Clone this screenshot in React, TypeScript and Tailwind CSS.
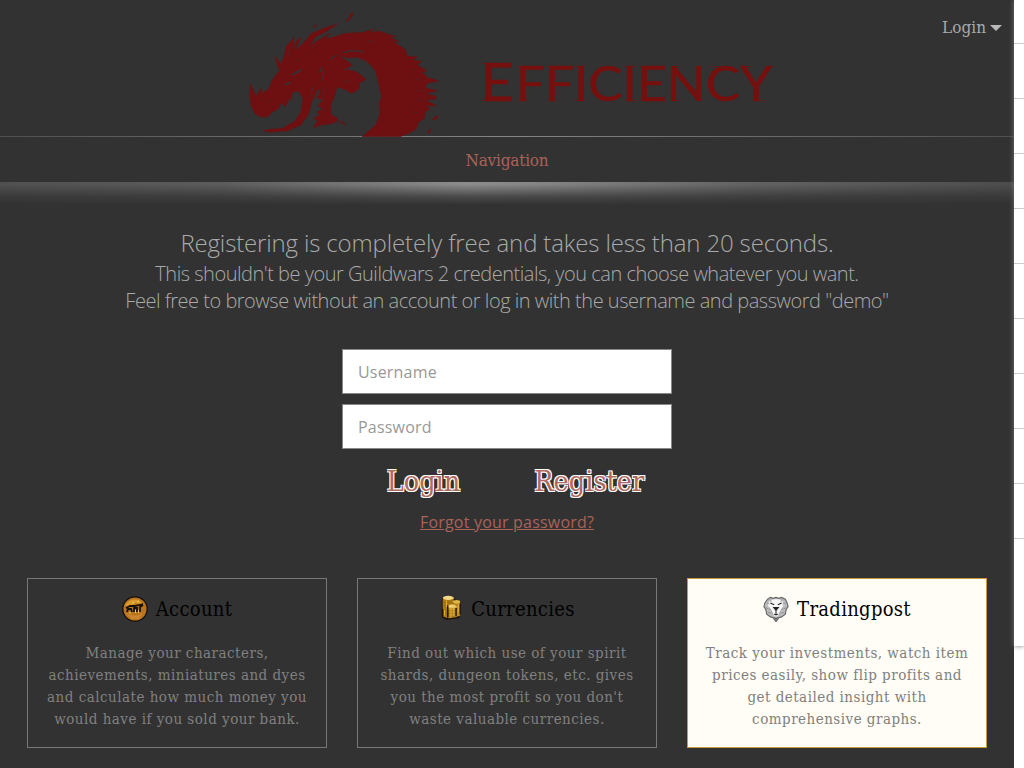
import type { ReactNode } from "react";

const serif = "font-['DejaVu_Serif_Condensed','DejaVu_Serif',serif] [font-stretch:condensed]";

function Dragon() {
  return (
    <svg width="230" height="137" viewBox="0 0 690 411" className="relative block shrink-0" aria-hidden="true">
      <g fill="#6e1011" stroke="#5a1a1c" strokeWidth="1.5">
        <path d="M61 250 78 289 93 264 97 280 115 267 128 238 148 211 138 185 136 166 151 193 162 170 168 140 193 111 188 145 201 120 214 112 194 152 222 127 244 100 288 82 327 70 286 96 257 112 240 138 263 121 280 112 302 98 288 116 316 109 350 99 399 97 434 86 418 97 448 93 486 106 500 109 482 112 510 126 488 124 526 148 531 167 564 171 548 179 576 184 562 194 580 205 592 213 575 217 587 224 590 232 628 242 590 251 587 263 625 272 587 281 620 289 618 298 589 299 620 318 588 319 600 327 585 337 585 354 566 367 560 386 538 400 510 410 396 410 438 374 450 338 447 310 454 290 446 252 437 214 411 184 380 172 352 174 330 166 347 180 368 194 349 207 382 216 408 238 387 252 390 265 365 281 342 267 322 262 314 288 303 314 303 343 324 355 319 367 296 373 275 375 249 383 263 362 250 354 270 345 260 337 278 327 264 318 278 299 260 295 272 270 263 269 247 304 235 344 213 375 173 393 120 397 98 392 118 388 158 384 196 362 213 333 218 296 206 274 187 278 184 303 179 294 167 320 153 309 148 325 127 337 113 351 93 352 75 342 62 316 58 286Z" />
        <path d="m346 63 13-11 1-11 10-3-6 16-13 10ZM608 356l17-12-5 13-12 3ZM590 397l15-13-8 16ZM324 362l18 4 5 9-13-7ZM248 78l14-4-8 7Z" />
      </g>
      <g fill="none" stroke="#333333" strokeLinecap="round">
        <path strokeWidth="5" d="M187 224 213 210M166 254l14-6" />
        <path strokeWidth="3.5" d="M269 218l6-17M282 213l-4 28M338 159l24-7 37 3M302 176l17-10M345 209l10-4" />
        <path strokeWidth="2" opacity="0.7" d="M179 149l-2 20M244 148l13-14M250 260l-9 31M281 260l-3 46M284 320v18M341 245l20-3M413 122l20 5M542 206l12 6M557 236l15 6M564 271l17 1M562 301l16 0M548 337l14 0M96 304l7-9M112 309l9-10M201 184l12-11" />
      </g>
    </svg>
  );
}

function Wordmark() {
  return (
    <svg width="300" height="80" viewBox="0 -12 300 80" className="mt-[40px] ml-[18px] block overflow-visible" aria-label="Efficiency">
      <g fill="#76100f" stroke="#76100f" strokeWidth="0.5" fontFamily="Lato, sans-serif">
        <text x="2" y="49" fontSize="52" textLength="34" lengthAdjust="spacingAndGlyphs">E</text>
        <text x="38" y="49" fontSize="48" textLength="256" lengthAdjust="spacingAndGlyphs">FFICIENCY</text>
      </g>
      <path d="M3 11.500h7M3 48.500h7M38 14.500h6M39 48.500h10M68 14.500h6M69 48.500h10M96 14.500h12M96 48.500h12M147 14.500h12M147 48.500h12M163 14.500h8M163 48.500h8M196 14.500h7M194 48.500h10M231 14.500h9M264 14.500h10M287 14.500h9M276 48.500h11" stroke="#76100f" strokeWidth="0.8" opacity="0.7" />
    </svg>
  );
}

function CoinIcon() {
  return (
    <svg width="26" height="26" viewBox="0 0 26 26" aria-hidden="true">
      <circle cx="13" cy="13" r="12.2" fill="#b8741c" stroke="#100c06" strokeWidth="1.2" />
      <path d="M3 9Q8 2 17 4l5 5-8-2-8 4Z" fill="#d79b2d" />
      <path d="M4 17q9 5 17 0l-4 6H9Z" fill="#c98530" />
      <path d="m4 12 4-2 5 0 8-2M5 16l1-3 3 0 1 3M12 16v-4l3 0v4M18 16v-5l3-2" fill="none" stroke="#171008" strokeWidth="1.8" />
      <path d="m10 6 2 1M15 6l2-1M8 18v-2M13.500 17v-3M16.500 17v-3" stroke="#f0c94a" strokeWidth="1" />
    </svg>
  );
}

function CoinsIcon() {
  return (
    <svg width="24" height="28" viewBox="0 0 26 28" className="relative -top-px" aria-hidden="true">
      <path d="M3 4v20l5 3 7-1 7-1 2-18-6-2-4-3H5Z" fill="#1c1306" />
      <path d="M4 4v19l5 2 1-8 6-5V3Z" fill="#a87818" />
      <path d="M16 7h7v15l-5 2-8 1V12l6-2Z" fill="#c1912a" />
      <ellipse cx="10" cy="3" rx="6" ry="2.2" fill="#f3d985" />
      <ellipse cx="19" cy="7" rx="4" ry="1.8" fill="#e1ba48" />
      <ellipse cx="14" cy="12" rx="5" ry="1.8" fill="#f1cf70" />
      <path d="M5 8h8M5 11h5M4 17h4M4 20h5M17 11h5M19 15h3M11 17h7M11 20h7M11 23h6" stroke="#8a5c12" strokeWidth="0.7" />
      <path d="M8 6v7M6 16v6M13 14v10M16 14v8M21 9v9" stroke="#ebb92f" />
      <path d="M9.500 11v13M18.500 14v9M23 9v12M4 15v8" stroke="#211204" strokeWidth="1.5" />
    </svg>
  );
}

function LionIcon() {
  return (
    <svg width="26" height="26" viewBox="0 0 28 27" aria-hidden="true">
      <path d="m5 3 3-2 3 1 3-1 3 1 3-1 4 2 2 4 1 4-2 3-1 5-4 3-3 1-3 4-3-4-3-1-4-3-1-5-2-3 1-4Z" fill="#bdbdbd" stroke="#666" strokeWidth="1.2" />
      <path d="m7 5 5-2h5l4 2 1 4-2 6-3 5-3 2-3-2-3-5-3-6Z" fill="#f6f6f6" />
      <path d="m8 7 4 2M20 7l-4 2M11.500 12h5L14 15ZM14 15v4m-2 0 2 1 2-1" fill="#252525" stroke="#252525" strokeWidth="1.1" />
      <path d="m7 3 2 3M4 7l3 1M3 12l4 2M5 17l4 1M21 3l-2 3M25 7l-4 1M25 12l-4 2M23 17l-4 1M7 12l4 8M21 12l-4 8" stroke="#888" strokeWidth="0.8" fill="none" />
      <path d="m11.500 22 2.500 4 2.500-4-2.500 1Z" fill="#666" />
    </svg>
  );
}

type CardProps = { title: string; icon: ReactNode; lines: string[]; active?: boolean };

function Card({ title, icon, lines, active }: CardProps) {
  return (
    <section className={`h-[170px] w-[300px] border pt-[16px] text-center ${active ? "border-[#c49b39] bg-[#fffdf5]" : "border-[#777] bg-[#323232]"}`}>
      <div className="flex h-7 items-center justify-center gap-2">
        {icon}
        <h2 className={`${serif} text-[20px] leading-7 tracking-[0.3px] text-black`}>{title}</h2>
      </div>
      <p className={`${serif} mt-[19px] text-[15px] leading-[22px] tracking-[0.48px] text-[#808080]`}>
        {lines.map((line) => <span key={line} className="block whitespace-nowrap">{line}</span>)}
      </p>
    </section>
  );
}

export default function App() {
  return (
    <div className="flex h-[768px] w-[1024px] overflow-hidden bg-[#323232]">
      <main className="flex w-[1014px] shrink-0 flex-col bg-[#323232]">
        <header className="z-10 flex h-[136px] shrink-0 pl-[230px]">
          <Dragon />
          <Wordmark />
          <button className={`${serif} mt-[16px] mr-[12px] ml-auto flex h-6 items-center text-[17px] text-[#aaa]`}>
            Login
            <svg width="12" height="7" viewBox="0 0 12 7" className="ml-1"><path d="M0 0h12L6 6Z" fill="#b9b9b9" /></svg>
          </button>
        </header>
        <nav className="flex h-[46px] shrink-0 flex-col">
          <div className="h-px shrink-0 bg-[linear-gradient(90deg,#505050,#858585_50%,#505050)]" />
          <a className={`${serif} flex grow items-center justify-center pt-[3px] text-[17px] tracking-[-0.2px] text-[#a96359]`}>Navigation</a>
        </nav>
        <div className="h-[24px] shrink-0 bg-[linear-gradient(180deg,rgba(50,50,50,0)_10%,rgba(50,50,50,0.75)_62%,#323232_95%),linear-gradient(90deg,#505050_0%,#5c5c5c_22%,#8c8c8c_46%,#868686_52%,#626262_74%,#4c4c4c_100%)]" />
        <div className="mt-[21px] flex flex-col items-center font-['Open_Sans',sans-serif] font-light text-[#aaa]">
          <h1 className="text-[24px] leading-[31px] tracking-[-0.15px]">Registering is completely free and takes less than 20 seconds.</h1>
          <p className="mt-[2px] text-[20px] leading-[27px] tracking-[-0.48px]">This shouldn't be your Guildwars 2 credentials, you can choose whatever you want.</p>
          <p className="text-[20px] leading-[27px] tracking-[-0.48px]">Feel free to browse without an account or log in with the username and password "demo"</p>
        </div>
        <form className="mt-[35px] flex flex-col items-center font-['Open_Sans',sans-serif]">
          <input aria-label="Username" placeholder="Username" className="h-[45px] w-[330px] border border-[#888] bg-white px-[15px] text-[16px] tracking-[0.2px] placeholder:text-[#999]" />
          <input aria-label="Password" type="password" placeholder="Password" className="mt-[10px] h-[45px] w-[330px] border border-[#888] bg-white px-[15px] text-[16px] tracking-[0.2px] placeholder:text-[#999]" />
          <div className={`${serif} mt-[12px] flex h-[42px] items-center gap-[74px] pl-[17px] text-[28.5px] text-[#b16a60]`}>
            <button type="button" className="[text-shadow:-1px_-1px_0_#fff,1px_-1px_0_#fff,-1px_1px_0_#fff,1px_1px_0_#fff]">Login</button>
            <button type="button" className="[text-shadow:-1px_-1px_0_#fff,1px_-1px_0_#fff,-1px_1px_0_#fff,1px_1px_0_#fff]">Register</button>
          </div>
          <a href="#" className="mt-[7px] text-[16px] leading-6 tracking-[0.2px] text-[#a96359] underline">Forgot your password?</a>
        </form>
        <div className="mt-[44px] flex gap-[30px] pl-[27px]">
          <Card title="Account" icon={<CoinIcon />} lines={["Manage your characters,", "achievements, miniatures and dyes", "and calculate how much money you", "would have if you sold your bank."]} />
          <Card title="Currencies" icon={<CoinsIcon />} lines={["Find out which use of your spirit", "shards, dungeon tokens, etc. gives", "you the most profit so you don't", "waste valuable currencies."]} />
          <Card active title="Tradingpost" icon={<LionIcon />} lines={["Track your investments, watch item", "prices easily, show flip profits and", "get detailed insight with", "comprehensive graphs."]} />
        </div>
      </main>
      <aside className="w-[10px] shrink-0 bg-white">
        <div className="h-[646px] bg-white shadow-[0_0_5px_#777]">
          {Array.from({ length: 10 }, (_, i) => <div key={i} className={`border-b border-[#ccc] ${i === 0 ? "h-[44px]" : "h-[55px]"}`} />)}
        </div>
      </aside>
    </div>
  );
}
